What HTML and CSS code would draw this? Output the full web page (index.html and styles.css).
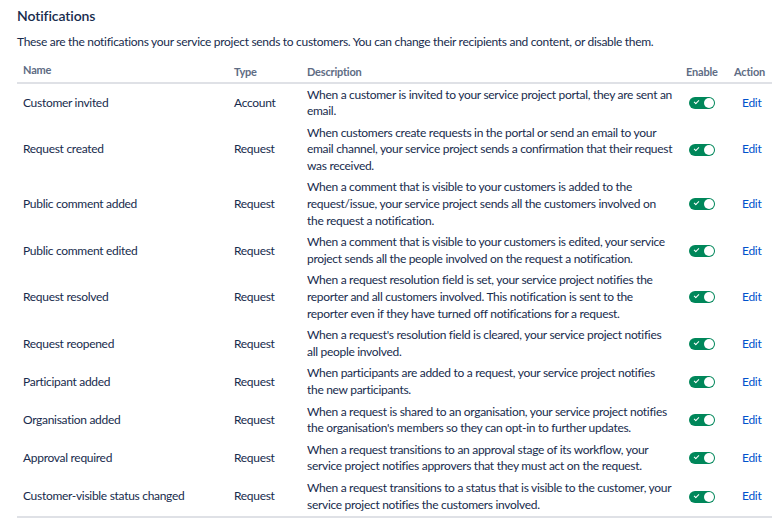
FILE: index.html
```html
<!DOCTYPE html>
<html lang="en">
<head>
    <meta charset="UTF-8">
    <meta name="viewport" content="width=device-width, initial-scale=1.0">
    <title>Notifications</title>
    <link rel="stylesheet" href="styles.css">
</head>
<body>
    <main class="page">
        <h2 class="page-title">Notifications</h2>
        <p class="page-intro">These are the notifications your service project sends to customers. You can change their recipients and content, or disable them.</p>

        <!-- Tabla de notificaciones -->
        <table class="notif-table">
            <thead>
                <tr>
                    <th class="col-name">Name</th>
                    <th class="col-type">Type</th>
                    <th class="col-desc">Description</th>
                    <th class="col-enable">Enable</th>
                    <th class="col-action">Action</th>
                </tr>
            </thead>
            <tbody>
                <tr>
                    <td>Customer invited</td>
                    <td>Account</td>
                    <td>When a customer is invited to your service project portal, they are sent an email.</td>
                    <td><span class="toggle"></span></td>
                    <td><a href="#" class="edit-link">Edit</a></td>
                </tr>
                <tr>
                    <td>Request created</td>
                    <td>Request</td>
                    <td>When customers create requests in the portal or send an email to your email channel, your service project sends a confirmation that their request was received.</td>
                    <td><span class="toggle"></span></td>
                    <td><a href="#" class="edit-link">Edit</a></td>
                </tr>
                <tr>
                    <td>Public comment added</td>
                    <td>Request</td>
                    <td>When a comment that is visible to your customers is added to the request/issue, your service project sends all the customers involved on the request a notification.</td>
                    <td><span class="toggle"></span></td>
                    <td><a href="#" class="edit-link">Edit</a></td>
                </tr>
                <tr>
                    <td>Public comment edited</td>
                    <td>Request</td>
                    <td>When a comment that is visible to your customers is edited, your service project sends all the people involved on the request a notification.</td>
                    <td><span class="toggle"></span></td>
                    <td><a href="#" class="edit-link">Edit</a></td>
                </tr>
                <tr>
                    <td>Request resolved</td>
                    <td>Request</td>
                    <td>When a request resolution field is set, your service project notifies the reporter and all customers involved. This notification is sent to the reporter even if they have turned off notifications for a request.</td>
                    <td><span class="toggle"></span></td>
                    <td><a href="#" class="edit-link">Edit</a></td>
                </tr>
                <tr>
                    <td>Request reopened</td>
                    <td>Request</td>
                    <td>When a request's resolution field is cleared, your service project notifies all people involved.</td>
                    <td><span class="toggle"></span></td>
                    <td><a href="#" class="edit-link">Edit</a></td>
                </tr>
                <tr>
                    <td>Participant added</td>
                    <td>Request</td>
                    <td>When participants are added to a request, your service project notifies the new participants.</td>
                    <td><span class="toggle"></span></td>
                    <td><a href="#" class="edit-link">Edit</a></td>
                </tr>
                <tr>
                    <td>Organisation added</td>
                    <td>Request</td>
                    <td>When a request is shared to an organisation, your service project notifies the organisation's members so they can opt-in to further updates.</td>
                    <td><span class="toggle"></span></td>
                    <td><a href="#" class="edit-link">Edit</a></td>
                </tr>
                <tr>
                    <td>Approval required</td>
                    <td>Request</td>
                    <td>When a request transitions to an approval stage of its workflow, your service project notifies approvers that they must act on the request.</td>
                    <td><span class="toggle"></span></td>
                    <td><a href="#" class="edit-link">Edit</a></td>
                </tr>
                <tr>
                    <td>Customer-visible status changed</td>
                    <td>Request</td>
                    <td>When a request transitions to a status that is visible to the customer, your service project notifies the customers involved.</td>
                    <td><span class="toggle"></span></td>
                    <td><a href="#" class="edit-link">Edit</a></td>
                </tr>
            </tbody>
        </table>
        <div class="below-bar"></div>
    </main>
</body>
</html>
```

FILE: styles.css
```css
/* Estilos generales */
* {
    margin: 0;
    padding: 0;
    box-sizing: border-box;
}

body {
    background-color: #ffffff;
    color: #172b4d;
    font-family: Lato, 'Noto Sans', sans-serif;
    font-size: 12px;
    letter-spacing: -0.3px;
}

.page {
    padding: 7px 11px 0 17px;
}

.page-title {
    font-size: 14px;
    font-weight: 600;
    line-height: 18px;
    letter-spacing: -0.1px;
}

.page-intro {
    margin-top: 8px;
    line-height: 18px;
}

/* Tabla */
.notif-table {
    width: 755px;
    margin-top: 7px;
    border-collapse: collapse;
    table-layout: fixed;
}

.notif-table th {
    color: #5e6c84;
    font-size: 11px;
    font-weight: 700;
    letter-spacing: -0.2px;
    text-align: left;
    vertical-align: bottom;
    padding: 4px 6px 4px;
    height: 25px;
    border-bottom: 2px solid #dfe1e6;
}

.notif-table th.col-name {
    vertical-align: top;
    padding-top: 5px;
}

.col-name { width: 211px; }
.col-type { width: 73px; }
.col-desc { width: 379px; }
.col-enable { width: 48px; }
.col-action { width: 44px; }

.notif-table td {
    padding: 2.5px 6px;
    line-height: 16.6px;
    vertical-align: middle;
}

.notif-table tbody tr:last-child td {
    border-bottom: 2px solid #dfe1e6;
}

.toggle {
    display: block;
    position: relative;
    width: 26px;
    height: 12px;
    border-radius: 6px;
    background-color: #00875a;
    margin-left: 3px;
}

.toggle::before {
    content: '';
    position: absolute;
    left: 5px;
    top: 3px;
    width: 4px;
    height: 2px;
    border-left: 1.5px solid #fff;
    border-bottom: 1.5px solid #fff;
    transform: rotate(-45deg);
}

.toggle::after {
    content: '';
    position: absolute;
    right: 1px;
    top: 1px;
    width: 10px;
    height: 10px;
    border-radius: 50%;
    background-color: #fff;
}

.edit-link {
    color: #0052cc;
    text-decoration: none;
    padding-left: 8px;
}

.below-bar {
    margin: 4px 0 0 -17px;
    width: 75px;
    height: 4px;
    background-color: #fbeaea;
}
```
